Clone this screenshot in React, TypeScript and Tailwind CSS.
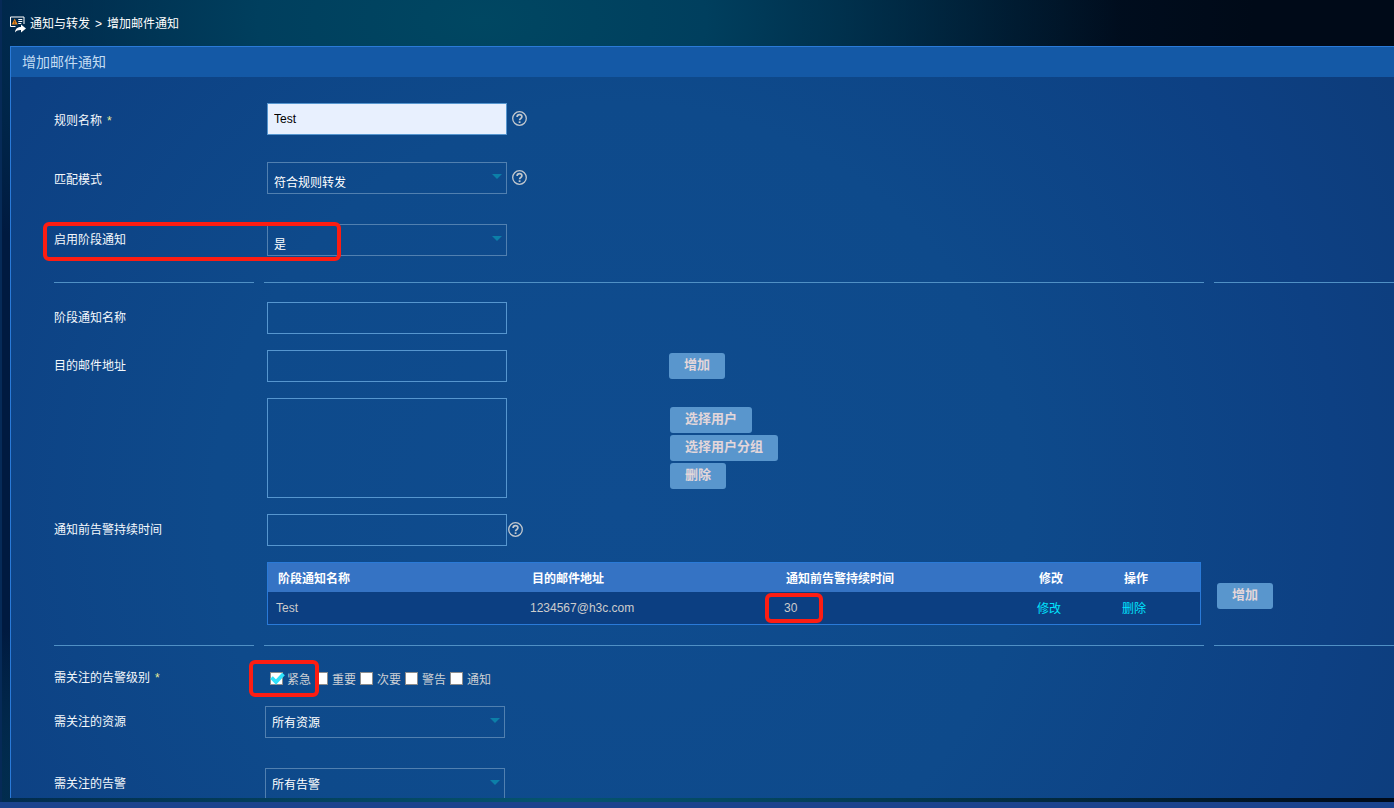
import { useId, useState } from "react";
import type { ReactNode } from "react";

const ROW = "grid grid-cols-[200px_minmax(0,940px)_minmax(0,1fr)] gap-x-2.5";

function HelpIcon() {
  return (
    <button type="button" aria-label="帮助" className="shrink-0 text-[#c3c8ce]">
      <svg width="16" height="16" viewBox="0 0 16 16" fill="none" stroke="currentColor" aria-hidden="true">
        <circle cx="7.5" cy="7.5" r="6.8" strokeWidth="1.3" />
        <path d="M5.100 6C5.100 4.400 6.100 3.600 7.500 3.600s2.400.9 2.400 2.200c0 1.700-2.300 1.700-2.300 3.500" strokeWidth="1.7" />
        <path d="M7.600 10.300v1.700" strokeWidth="1.8" />
      </svg>
    </button>
  );
}

function Highlight({ className }: { className: string }) {
  return (
    <span
      aria-hidden="true"
      className={`pointer-events-none absolute rounded-md border-4 border-[#fd1d12] ${className}`}
    />
  );
}

function Label({
  htmlFor,
  required,
  low,
  children,
}: {
  htmlFor?: string;
  required?: boolean;
  low?: boolean;
  children: ReactNode;
}) {
  return (
    <label htmlFor={htmlFor} className={`self-center text-[#f4f8fc] ${low ? "pt-1" : ""}`}>
      {children}
      {required && <span className="ml-[5px] text-[#e9ee9a]">*</span>}
    </label>
  );
}

function Select({ id, options, low }: { id: string; options: string[]; low?: boolean }) {
  return (
    <div className="relative w-60">
      <select
        id={id}
        className={`block h-8 w-full appearance-none border border-[#5180b0] bg-transparent pl-1.5 pr-6 text-white outline-none ${
          low ? "pt-2.5" : "pt-0.5"
        }`}
      >
        {options.map((o) => (
          <option key={o} className="bg-[#0f4a8c]">
            {o}
          </option>
        ))}
      </select>
      <svg
        width="10"
        height="5"
        viewBox="0 0 10 5"
        aria-hidden="true"
        className="pointer-events-none absolute right-[5px] top-3 fill-[#0c7fa8]"
      >
        <path d="M0 0h10L5 5z" />
      </svg>
    </div>
  );
}

function Input({ id }: { id: string }) {
  return (
    <input id={id} type="text" className="block h-8 w-60 border border-[#5696cf] bg-transparent px-1.5 text-white outline-none" />
  );
}

function Button({ children }: { children: ReactNode }) {
  return (
    <button
      type="button"
      className="h-[26px] rounded-[3px] bg-[#5996cd] px-[15px] pb-0.5 text-[13px] font-bold leading-5 text-[#e3d6da]"
    >
      {children}
    </button>
  );
}

function Divider({ className }: { className: string }) {
  return (
    <div className={`${ROW} ${className}`} role="separator">
      <span className="h-px bg-[#5090c5]" />
      <span className="h-px bg-[#5090c5]" />
      <span className="h-px bg-[#5090c5]" />
    </div>
  );
}

function Level({ name, initial }: { name: string; initial?: boolean }) {
  const [on, setOn] = useState(!!initial);
  const id = useId();
  return (
    <span className="flex items-center gap-1">
      <span className="relative size-[13px]">
        <input
          id={id}
          type="checkbox"
          checked={on}
          onChange={(e) => setOn(e.target.checked)}
          className="block size-[13px] appearance-none border border-[#8c8c8c] bg-white"
        />
        {on && (
          <svg
            viewBox="0 0 15 13"
            width="15"
            height="13"
            aria-hidden="true"
            className="pointer-events-none absolute left-0 top-0 fill-none stroke-[#2ee2fb]"
          >
            <path d="M1.500 5.500l4.500 4.500 7.500-8" strokeWidth="3.8" />
          </svg>
        )}
      </span>
      <label htmlFor={id} className="pt-1 text-[#ccd0d4]">
        {name}
      </label>
    </span>
  );
}

export default function App() {
  return (
    <div className="flex h-screen flex-col overflow-hidden bg-[#1b438d] font-['Liberation_Sans','Noto_Sans_CJK_SC',sans-serif] text-xs">
      <div className="flex min-h-0 flex-1 flex-col border-l-2 border-[#062a57] bg-[radial-gradient(ellipse_640px_320px_at_480px_20px,#004762_0%,#003f5e_35%,transparent_100%),radial-gradient(ellipse_800px_240px_at_560px_100%,#05556f_0%,transparent_100%),linear-gradient(90deg,#001a40_0%,#00162f_50%,#000a18_90%)] pb-1 pl-2">
        <nav aria-label="位置" className="flex h-[46px] shrink-0 items-center pt-0.5 text-white">
          <svg width="17" height="17" viewBox="0 0 17 17" className="mr-[3px]" aria-hidden="true">
            <path d="M5.500 10.500H.5v-9.500h13.500v7" fill="none" stroke="#fff" />
            <path d="M4.700 2.500L7.700 8.500H1.700z" fill="#f08a1c" />
            <path d="M4.700 4.800v1.800M4.700 7.200v.8" stroke="#5a3a1c" strokeWidth=".9" />
            <path d="M8.300 3.500h4M8.300 5.500h4M8.300 7.500h3" stroke="#fff" />
            <path d="M5 16.500c.3-4 2.700-5.500 6-5.500V8.500l5 4-5 4V14c-2.500-.1-4.500.5-6 2.500z" fill="#fff" />
          </svg>
          <a href="#forward">通知与转发</a>
          <span className="px-[5px]">&gt;</span>
          <span>增加邮件通知</span>
        </nav>

        <main className="flex min-h-0 flex-1 flex-col overflow-hidden border-l border-t border-[#2a7ad8]">
          <h1 className="flex h-[30px] shrink-0 items-center bg-[#1459a6] pl-[11px] text-sm text-[#c3dcf2]">增加邮件通知</h1>
          <form
            onSubmit={(e) => e.preventDefault()}
            className="min-h-0 flex-1 overflow-hidden bg-[radial-gradient(ellipse_900px_900px_at_44%_60%,#0f4c8f_0%,#0e4a8b_45%,#0d4083_80%,#0d3c7a_100%)] pl-[43px] pt-[26px]"
          >
            <div className={ROW}>
              <Label htmlFor="rule" required low>规则名称</Label>
              <div className="flex items-center gap-[5px] px-[3px]">
                <input
                  id="rule"
                  type="text"
                  defaultValue="Test"
                  className="block h-8 w-60 border border-[#5696cf] bg-[#e8f0fe] px-1.5 text-black outline-none"
                />
                <HelpIcon />
              </div>
            </div>

            <div className={`${ROW} mt-[27px]`}>
              <Label htmlFor="mode" low>匹配模式</Label>
              <div className="flex items-center gap-[5px] px-[3px]">
                <Select id="mode" options={["符合规则转发", "符合规则不转发"]} low />
                <HelpIcon />
              </div>
            </div>

            <div className={`${ROW} relative mt-[30px]`}>
              <Label htmlFor="stage">启用阶段通知</Label>
              <div className="px-[3px]">
                <Select id="stage" options={["是", "否"]} low />
              </div>
              <Highlight className="-left-[11px] -top-0.5 h-[39px] w-[298px]" />
            </div>

            <Divider className="mt-[26px]" />

            <div className={`${ROW} mt-[19px]`}>
              <Label htmlFor="stage-name">阶段通知名称</Label>
              <div className="px-[3px]">
                <Input id="stage-name" />
              </div>
            </div>

            <div className={`${ROW} mt-4`}>
              <Label htmlFor="mail">目的邮件地址</Label>
              <div className="flex items-center px-[3px]">
                <div className="w-[402px]">
                  <Input id="mail" />
                </div>
                <Button>增加</Button>
              </div>
            </div>

            <div className={`${ROW} mt-4`}>
              <span />
              <div className="flex items-center px-[3px]">
                <div className="w-[403px]">
                  <textarea
                    aria-label="邮件地址列表"
                    className="block h-[100px] w-60 resize-none border border-[#5696cf] bg-transparent p-1.5 text-white outline-none"
                  />
                </div>
                <div className="flex flex-col items-start gap-0.5">
                  <Button>选择用户</Button>
                  <Button>选择用户分组</Button>
                  <Button>删除</Button>
                </div>
              </div>
            </div>

            <div className={`${ROW} mt-4`}>
              <Label htmlFor="duration">通知前告警持续时间</Label>
              <div className="flex items-center gap-px px-[3px]">
                <Input id="duration" />
                <HelpIcon />
              </div>
            </div>

            <div className={`${ROW} mt-4`}>
              <span />
              <div className="px-[3px]">
                <div className="border border-[#2a7ad8]">
                  <table className="w-full table-fixed border-collapse text-left">
                    <colgroup>
                      <col className="w-[254px]" />
                      <col className="w-[254px]" />
                      <col />
                      <col className="w-[85px]" />
                      <col className="w-[86px]" />
                    </colgroup>
                    <thead className="bg-[#3573c4] text-white">
                      <tr className="h-[29px]">
                        <th className="px-2.5 pb-0 pt-0.5">阶段通知名称</th>
                        <th className="px-2.5 pb-0 pt-0.5">目的邮件地址</th>
                        <th className="px-2.5 pb-0 pt-0.5">通知前告警持续时间</th>
                        <th className="px-2.5 pb-0 pt-0.5">修改</th>
                        <th className="px-2.5 pb-0 pt-0.5">操作</th>
                      </tr>
                    </thead>
                    <tbody className="bg-[#0c3f82] text-[#cccccc]">
                      <tr className="h-8">
                        <td className="px-2 py-0">Test</td>
                        <td className="px-2 py-0">1234567@h3c.com</td>
                        <td className="relative px-2 py-0">
                          30
                          <Highlight className="-left-[11px] top-px h-[30px] w-[58px]" />
                        </td>
                        <td className="px-2 pb-0 pt-0.5">
                          <a href="#edit" className="text-[#00e4ff]">修改</a>
                        </td>
                        <td className="px-2 pb-0 pt-0.5">
                          <a href="#delete" className="text-[#00e4ff]">删除</a>
                        </td>
                      </tr>
                    </tbody>
                  </table>
                </div>
              </div>
              <div className="flex items-center px-[3px] pt-1">
                <Button>增加</Button>
              </div>
            </div>

            <Divider className="mt-5" />

            <div className={`${ROW} mt-5`}>
              <span className="self-center text-[#f4f8fc]">
                需关注的告警级别<span className="ml-[5px] text-[#e9ee9a]">*</span>
              </span>
              <div className="relative flex h-6 items-center gap-1 px-1.5">
                <Level name="紧急" initial />
                <Level name="重要" />
                <Level name="次要" />
                <Level name="警告" />
                <Level name="通知" />
                <Highlight className="-left-[15px] -top-1.5 h-[37px] w-[70px]" />
              </div>
            </div>

            <div className={`${ROW} mt-4`}>
              <Label htmlFor="resource">需关注的资源</Label>
              <div className="px-px">
                <Select id="resource" options={["所有资源", "指定资源"]} />
              </div>
            </div>

            <div className={`${ROW} mt-[30px]`}>
              <Label htmlFor="alarm">需关注的告警</Label>
              <div className="px-px">
                <Select id="alarm" options={["所有告警", "指定告警"]} />
              </div>
            </div>
          </form>
        </main>
      </div>
      <div className="h-1.5 shrink-0 bg-[#1b438d]" />
    </div>
  );
}
